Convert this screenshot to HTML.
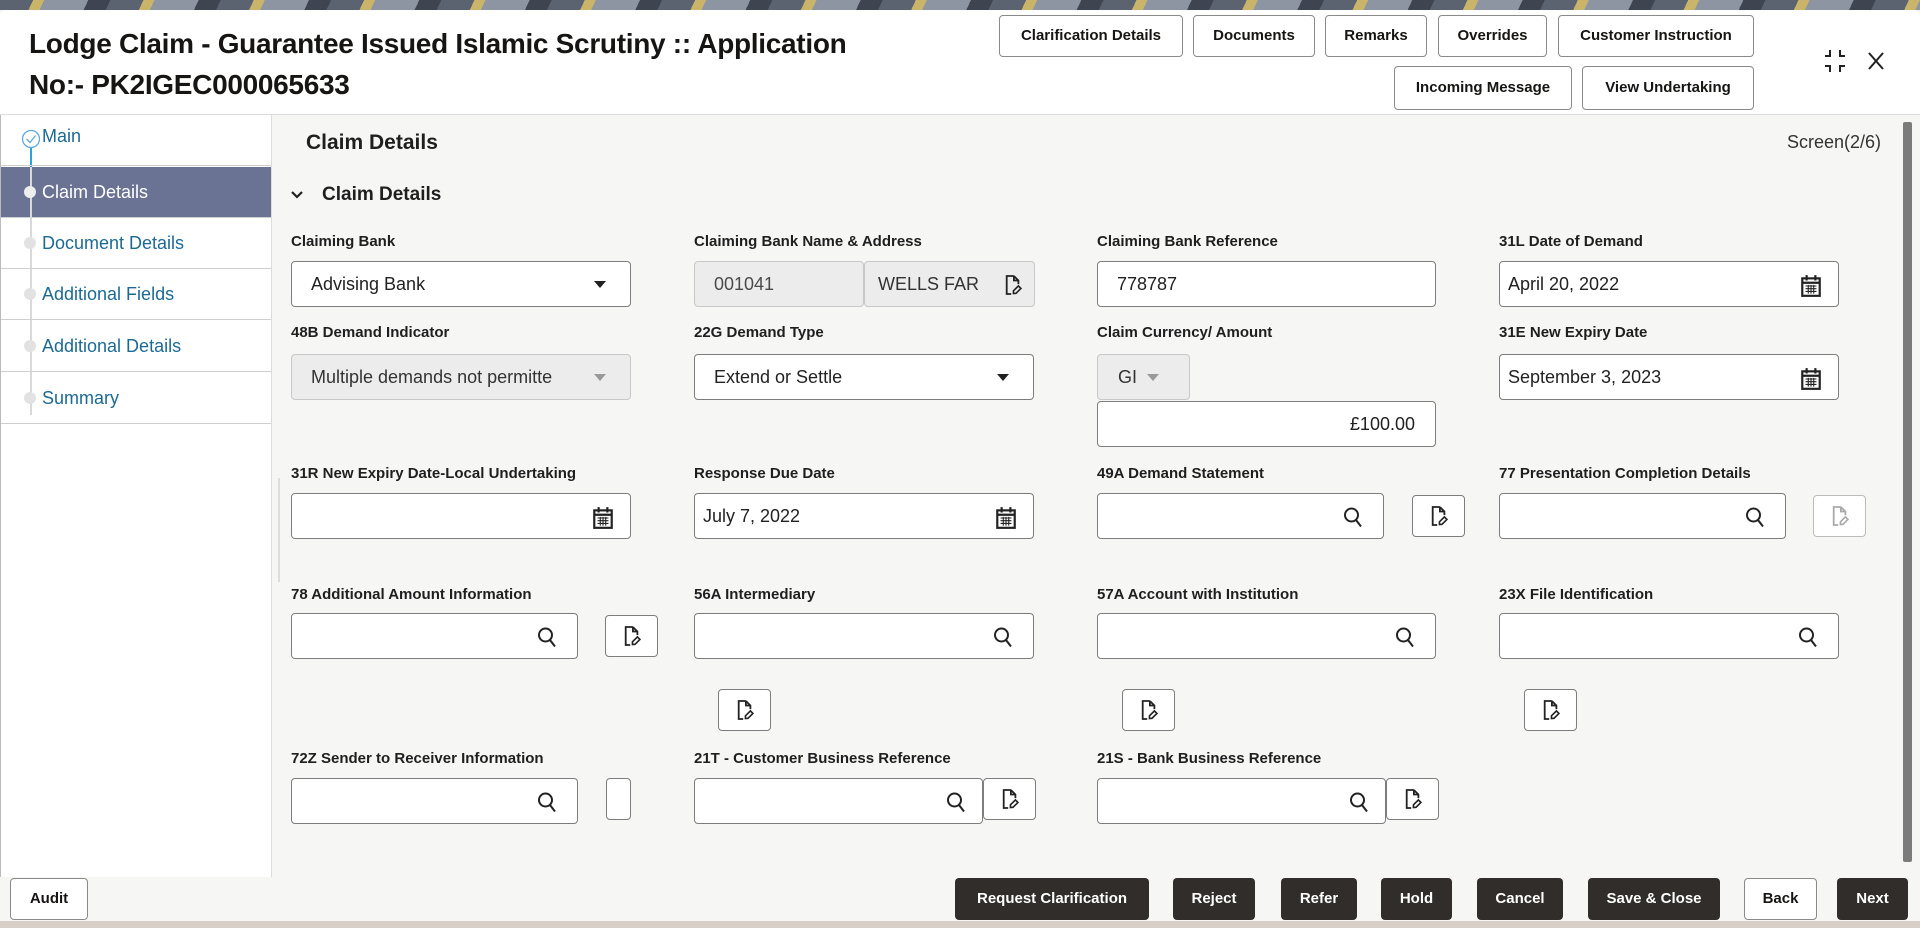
<!DOCTYPE html>
<html><head><meta charset="utf-8">
<style>
*{margin:0;padding:0}
body{width:1920px;height:928px;position:relative;overflow:hidden;font-family:"Liberation Sans",sans-serif;background:#f6f6f5;color:#1f1f1f}
.a{position:absolute}
.topstrip{left:0;top:0;width:1920px;height:10px;background:repeating-linear-gradient(115deg,#5b6270 0 30px,#c9b46a 30px 40px,#8d95a3 40px 80px,#3e4450 80px 100px)}
.hdr{left:0;top:10px;width:1920px;height:104px;background:#fff;border-bottom:1px solid #dcdcdc;border-radius:6px 6px 0 0}
.title{left:29px;top:23px;font-size:28px;font-weight:bold;line-height:41px;color:#161513;letter-spacing:-0.3px}
.hb{position:absolute;height:42px;box-sizing:border-box;border:1px solid #8a8a8a;border-radius:4px;background:#fff;font-size:15px;font-weight:bold;text-align:center;line-height:40px;color:#161513}
.side{left:0;top:115px;width:270px;height:762px;background:#fff;border-right:1px solid #ddd;border-left:1px solid #bbb}
.si{position:absolute;left:0;width:270px;height:51px;border-bottom:1px solid #cfcfcf;font-size:18px;color:#1c6a94;line-height:51px;padding-left:41px;box-sizing:border-box}
.dot{position:absolute;left:23px;width:12px;height:12px;border-radius:50%;background:#e2e2e2}
.lbl{position:absolute;font-size:15px;font-weight:bold;color:#1f1f1f}
.in{position:absolute;height:46px;box-sizing:border-box;border:1px solid #7d7d7d;border-radius:4px;background:#fff;font-size:18px;color:#222;line-height:44px;padding-left:19px;white-space:nowrap;overflow:hidden}
.dis{background:#ececec;border-color:#c8c8c8;color:#4a4a4a}
.ic{position:absolute;right:14px;top:12px}
.db{position:absolute;width:53px;height:42px;box-sizing:border-box;border:1px solid #7d7d7d;border-radius:4px;background:#fff}
.db svg{position:absolute;left:17px;top:9px}
.fb{position:absolute;top:878px;height:42px;box-sizing:border-box;border-radius:4px;background:#312d2a;color:#fff;font-size:15px;font-weight:bold;text-align:center;line-height:42px}
.wb{background:#fff;color:#161513;border:1px solid #8a8a8a;line-height:40px}
</style></head><body>
<svg width="0" height="0" style="position:absolute">
<defs>
<symbol id="doc" viewBox="0 0 20 24"><path d="M11 2H3V22H8M11 2L16 7V11M11 2V7H16" fill="none" stroke="currentColor" stroke-width="2"/><path d="M10.5 21.5V18.5L16 13L18.8 15.8L13.3 21.3Z" fill="none" stroke="currentColor" stroke-width="1.8"/></symbol>
<symbol id="srch" viewBox="0 0 20 22"><circle cx="8.5" cy="9" r="6.5" fill="none" stroke="currentColor" stroke-width="2"/><path d="M13 14L18 20.5" stroke="currentColor" stroke-width="2"/></symbol>
<symbol id="cal" viewBox="0 0 20 22"><rect x="2" y="4" width="16" height="16" fill="none" stroke="currentColor" stroke-width="2"/><path d="M6 1V6M14 1V6M2 8H18" stroke="currentColor" stroke-width="2"/><path d="M5 11H15M5 13.5H15M5 16H15M7.5 10V18M10 10V18M12.5 10V18" stroke="currentColor" stroke-width="1"/></symbol>
</defs></svg>

<div class="a topstrip"></div>
<div class="a hdr"></div>
<div class="a title">Lodge Claim - Guarantee Issued Islamic Scrutiny :: Application<br>No:- PK2IGEC000065633</div>

<div class="hb" style="left:999px;top:15px;width:184px">Clarification Details</div>
<div class="hb" style="left:1193px;top:15px;width:122px">Documents</div>
<div class="hb" style="left:1325px;top:15px;width:102px">Remarks</div>
<div class="hb" style="left:1438px;top:15px;width:109px">Overrides</div>
<div class="hb" style="left:1558px;top:15px;width:196px">Customer Instruction</div>
<div class="hb" style="left:1394px;top:66px;width:178px;height:44px;line-height:42px">Incoming Message</div>
<div class="hb" style="left:1582px;top:66px;width:172px;height:44px;line-height:42px">View Undertaking</div>
<svg class="a" style="left:1823px;top:48px" width="24" height="26" viewBox="0 0 24 26"><path d="M7 2V8H2M17 2V8H22M7 24V18H2M17 24V18H22" fill="none" stroke="#222" stroke-width="2"/></svg>
<svg class="a" style="left:1867px;top:51px" width="18" height="20" viewBox="0 0 18 20"><path d="M2 2L16 18M16 2L2 18" stroke="#222" stroke-width="2"/></svg>

<div class="a side">
<div class="a" style="left:29px;top:40px;width:2px;height:260px;background:#d9d9d9"></div>
<div class="a" style="left:29px;top:30px;width:2px;height:22px;background:#2aa3d8"></div>
<div class="si" style="top:0;line-height:30px;padding-top:6px">Main</div>
<svg class="a" style="left:20px;top:14px" width="20" height="20" viewBox="0 0 20 20"><circle cx="10" cy="10" r="8.5" fill="#fff" stroke="#5fa8e0" stroke-width="1.3"/><path d="M5.5 10L9 13.5L14.5 6.5" fill="none" stroke="#5fa8e0" stroke-width="1.3"/></svg>
<div class="si" style="top:52px;background:#6a7394;color:#fff">Claim Details</div>
<div class="a" style="left:29px;top:52px;width:2px;height:51px;background:#d9d9d9"></div>
<div class="dot" style="top:71px;background:#eee"></div>
<div class="si" style="top:103px">Document Details</div><div class="dot" style="top:122px"></div>
<div class="si" style="top:154px">Additional Fields</div><div class="dot" style="top:173px"></div>
<div class="si" style="top:206px">Additional Details</div><div class="dot" style="top:225px"></div>
<div class="si" style="top:258px">Summary</div><div class="dot" style="top:277px"></div>
</div>

<div class="a" style="left:306px;top:131px;font-size:21px;font-weight:bold">Claim Details</div>
<div class="a" style="left:1787px;top:132px;font-size:18px;color:#333">Screen(2/6)</div>
<svg class="a" style="left:290px;top:189px" width="14" height="12" viewBox="0 0 14 12"><path d="M2 3L7 8L12 3" fill="none" stroke="#222" stroke-width="2.2"/></svg>
<div class="a" style="left:322px;top:184px;font-size:19px;font-weight:bold">Claim Details</div>
<div class="a" style="left:1903px;top:122px;width:9px;height:740px;background:#7b7b7b;border-radius:2px"></div>
<div class="a" style="left:278px;top:478px;width:2px;height:104px;background:#ddd"></div>

<!-- Row 1 -->
<div class="lbl" style="left:291px;top:233px">Claiming Bank</div>
<div class="in" style="left:291px;top:261px;width:340px">Advising Bank<svg class="ic" style="top:19px;right:24px" width="12" height="8" viewBox="0 0 12 8"><path d="M0 0H12L6 7Z" fill="#222"/></svg></div>
<div class="lbl" style="left:694px;top:233px">Claiming Bank Name &amp; Address</div>
<div class="in dis" style="left:694px;top:261px;width:170px">001041</div>
<div class="in dis" style="left:864px;top:261px;width:171px;padding-left:13px;color:#333">WELLS FAR<svg class="ic" style="right:12px;color:#222" width="18" height="22"><use href="#doc"/></svg></div>
<div class="lbl" style="left:1097px;top:233px">Claiming Bank Reference</div>
<div class="in" style="left:1097px;top:261px;width:339px">778787</div>
<div class="lbl" style="left:1499px;top:233px">31L Date of Demand</div>
<div class="in" style="left:1499px;top:261px;width:340px;padding-left:8px">April 20, 2022<svg class="ic" style="right:16px" width="22" height="24"><use href="#cal"/></svg></div>

<!-- Row 2 -->
<div class="lbl" style="left:291px;top:324px">48B Demand Indicator</div>
<div class="in dis" style="left:291px;top:354px;width:340px;color:#333">Multiple demands not permitte<svg class="ic" style="top:19px;right:24px" width="12" height="8" viewBox="0 0 12 8"><path d="M0 0H12L6 7Z" fill="#999"/></svg></div>
<div class="lbl" style="left:694px;top:324px">22G Demand Type</div>
<div class="in" style="left:694px;top:354px;width:340px">Extend or Settle<svg class="ic" style="top:19px;right:24px" width="12" height="8" viewBox="0 0 12 8"><path d="M0 0H12L6 7Z" fill="#222"/></svg></div>
<div class="lbl" style="left:1097px;top:324px">Claim Currency/ Amount</div>
<div class="in dis" style="left:1097px;top:354px;width:93px;padding-left:20px;color:#333">GI<svg class="ic" style="top:19px;right:30px" width="12" height="8" viewBox="0 0 12 8"><path d="M0 0H12L6 7Z" fill="#999"/></svg></div>
<div class="in" style="left:1097px;top:401px;width:339px;text-align:right;padding-right:20px">£100.00</div>
<div class="lbl" style="left:1499px;top:324px">31E New Expiry Date</div>
<div class="in" style="left:1499px;top:354px;width:340px;padding-left:8px">September 3, 2023<svg class="ic" style="right:16px" width="22" height="24"><use href="#cal"/></svg></div>

<!-- Row 3 -->
<div class="lbl" style="left:291px;top:465px">31R New Expiry Date-Local Undertaking</div>
<div class="in" style="left:291px;top:493px;width:340px"><svg class="ic" style="right:16px" width="22" height="24"><use href="#cal"/></svg></div>
<div class="lbl" style="left:694px;top:465px">Response Due Date</div>
<div class="in" style="left:694px;top:493px;width:340px;padding-left:8px">July 7, 2022<svg class="ic" style="right:16px" width="22" height="24"><use href="#cal"/></svg></div>
<div class="lbl" style="left:1097px;top:465px">49A Demand Statement</div>
<div class="in" style="left:1097px;top:493px;width:287px"><svg class="ic" style="right:20px" width="20" height="22"><use href="#srch"/></svg></div>
<div class="db" style="left:1412px;top:495px;color:#222"><svg width="18" height="22"><use href="#doc"/></svg></div>
<div class="lbl" style="left:1499px;top:465px">77 Presentation Completion Details</div>
<div class="in" style="left:1499px;top:493px;width:287px"><svg class="ic" style="right:20px" width="20" height="22"><use href="#srch"/></svg></div>
<div class="db" style="left:1813px;top:495px;color:#aaa;border-color:#bbb"><svg width="18" height="22"><use href="#doc"/></svg></div>

<!-- Row 4 -->
<div class="lbl" style="left:291px;top:586px">78 Additional Amount Information</div>
<div class="in" style="left:291px;top:613px;width:287px"><svg class="ic" style="right:20px" width="20" height="22"><use href="#srch"/></svg></div>
<div class="db" style="left:605px;top:615px;color:#222"><svg width="18" height="22"><use href="#doc"/></svg></div>
<div class="lbl" style="left:694px;top:586px">56A Intermediary</div>
<div class="in" style="left:694px;top:613px;width:340px"><svg class="ic" style="right:20px" width="20" height="22"><use href="#srch"/></svg></div>
<div class="lbl" style="left:1097px;top:586px">57A Account with Institution</div>
<div class="in" style="left:1097px;top:613px;width:339px"><svg class="ic" style="right:20px" width="20" height="22"><use href="#srch"/></svg></div>
<div class="lbl" style="left:1499px;top:586px">23X File Identification</div>
<div class="in" style="left:1499px;top:613px;width:340px"><svg class="ic" style="right:20px" width="20" height="22"><use href="#srch"/></svg></div>
<div class="db" style="left:718px;top:689px;color:#222"><svg width="18" height="22"><use href="#doc"/></svg></div>
<div class="db" style="left:1122px;top:689px;color:#222"><svg width="18" height="22"><use href="#doc"/></svg></div>
<div class="db" style="left:1524px;top:689px;color:#222"><svg width="18" height="22"><use href="#doc"/></svg></div>

<!-- Row 5 -->
<div class="lbl" style="left:291px;top:750px">72Z Sender to Receiver Information</div>
<div class="in" style="left:291px;top:778px;width:287px"><svg class="ic" style="right:20px" width="20" height="22"><use href="#srch"/></svg></div>
<div class="db" style="left:606px;top:778px;width:25px;height:42px"></div>
<div class="lbl" style="left:694px;top:750px">21T - Customer Business Reference</div>
<div class="in" style="left:694px;top:778px;width:289px"><svg class="ic" style="right:16px" width="20" height="22"><use href="#srch"/></svg></div>
<div class="db" style="left:983px;top:778px;color:#222"><svg width="18" height="22"><use href="#doc"/></svg></div>
<div class="lbl" style="left:1097px;top:750px">21S - Bank Business Reference</div>
<div class="in" style="left:1097px;top:778px;width:289px"><svg class="ic" style="right:16px" width="20" height="22"><use href="#srch"/></svg></div>
<div class="db" style="left:1386px;top:778px;color:#222"><svg width="18" height="22"><use href="#doc"/></svg></div>

<!-- Footer -->
<div class="fb wb" style="left:10px;width:78px">Audit</div>
<div class="fb" style="left:955px;width:194px">Request Clarification</div>
<div class="fb" style="left:1173px;width:82px">Reject</div>
<div class="fb" style="left:1281px;width:76px">Refer</div>
<div class="fb" style="left:1381px;width:71px">Hold</div>
<div class="fb" style="left:1477px;width:86px">Cancel</div>
<div class="fb" style="left:1588px;width:132px">Save &amp; Close</div>
<div class="fb wb" style="left:1744px;width:73px">Back</div>
<div class="fb" style="left:1837px;width:71px">Next</div>
<div class="a" style="left:0;top:921px;width:1920px;height:7px;background:#d8cfc8"></div>
</body></html>
